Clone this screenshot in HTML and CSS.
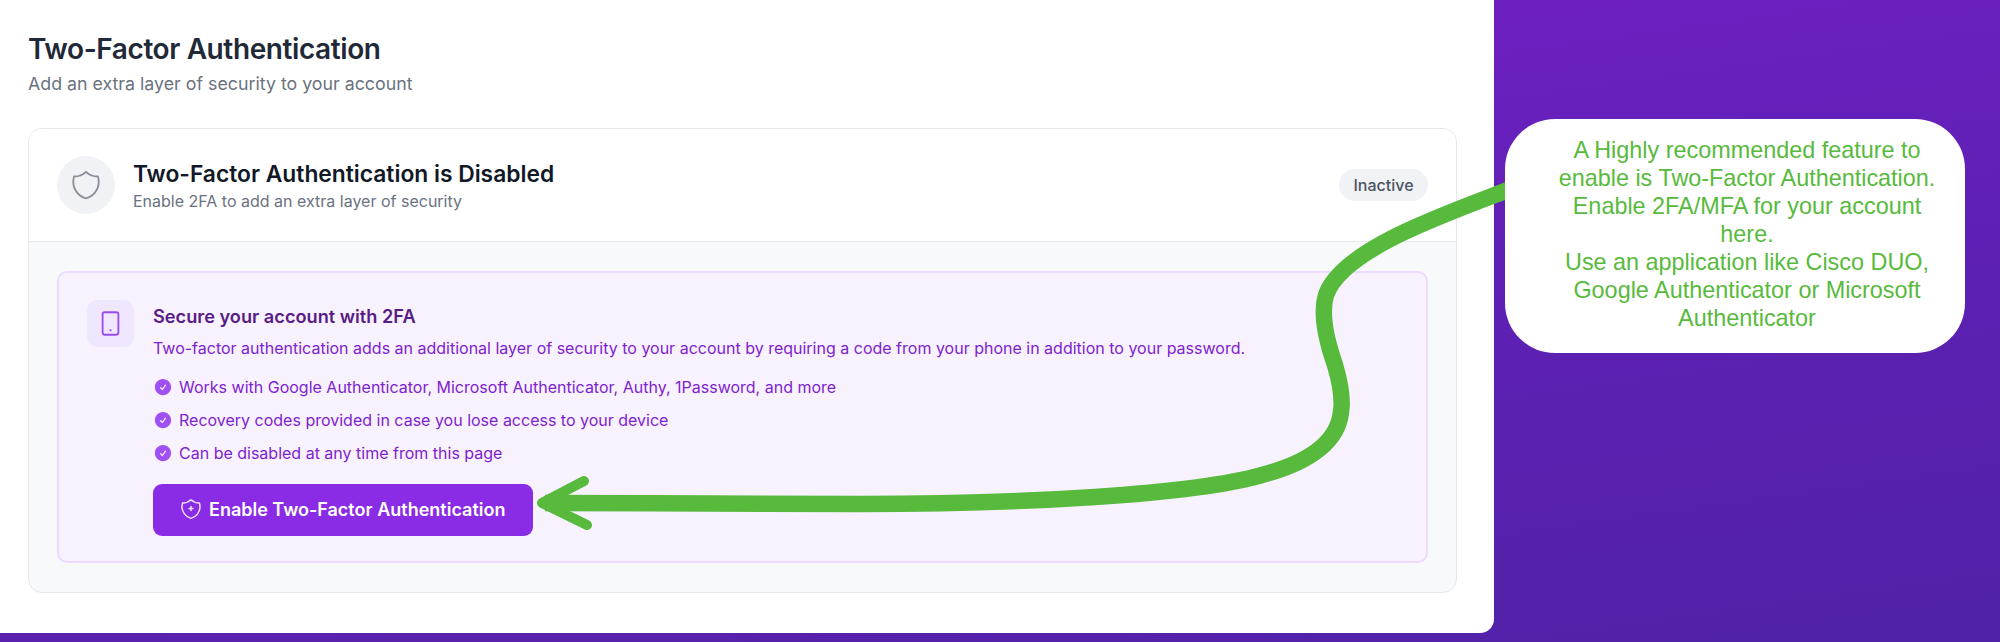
FILE: index.html
```html
<!DOCTYPE html>
<html lang="en">
<head>
<meta charset="utf-8">
<title>Two-Factor Authentication</title>
<link rel="stylesheet" href="styles.css">
</head>
<body>
<main class="panel">
  <h1 class="page-title">Two-Factor Authentication</h1>
  <p class="page-sub">Add an extra layer of security to your account</p>
  <section class="card">
    <header class="card-head">
      <div class="status-icon">
        <svg class="i-shield" viewBox="0 0 24 24" fill="none" stroke="currentColor" stroke-width="1.3" stroke-linejoin="round"><path d="M12 2.714A11.959 11.959 0 0 1 3.598 6 11.99 11.99 0 0 0 3 9.749c0 5.592 3.824 10.29 9 11.623 5.176-1.332 9-6.03 9-11.622 0-1.31-.21-2.571-.598-3.751h-.152c-3.196 0-6.1-1.248-8.25-3.286Z"/></svg>
      </div>
      <div class="status-text">
        <h2 class="status-title">Two-Factor Authentication is Disabled</h2>
        <p class="status-sub">Enable 2FA to add an extra layer of security</p>
      </div>
      <span class="badge">Inactive</span>
    </header>
    <div class="card-body">
      <div class="promo">
        <div class="promo-icon">
          <svg class="i-phone" viewBox="0 0 24 24" fill="none" stroke="currentColor" stroke-width="1.6" stroke-linecap="round"><rect x="5" y="2" width="14" height="20" rx="2"/><path d="M12 18h.01" stroke-width="2"/></svg>
        </div>
        <div class="promo-main">
          <h3 class="promo-title">Secure your account with 2FA</h3>
          <p class="promo-text">Two-factor authentication adds an additional layer of security to your account by requiring a code from your phone in addition to your password.</p>
          <ul class="checks">
            <li><svg class="i-check" viewBox="0 0 24 24" fill="currentColor"><path fill-rule="evenodd" d="M2.25 12c0-5.385 4.365-9.75 9.75-9.75s9.75 4.365 9.75 9.75-4.365 9.75-9.75 9.75S2.25 17.385 2.25 12Zm13.36-1.814a.75.75 0 1 0-1.22-.872l-3.236 4.53L9.53 12.22a.75.75 0 0 0-1.06 1.06l2.25 2.25a.75.75 0 0 0 1.14-.094l3.75-5.25Z"/></svg>Works with Google Authenticator, Microsoft Authenticator, Authy, 1Password, and more</li>
            <li><svg class="i-check" viewBox="0 0 24 24" fill="currentColor"><path fill-rule="evenodd" d="M2.25 12c0-5.385 4.365-9.75 9.75-9.75s9.75 4.365 9.75 9.75-4.365 9.75-9.75 9.75S2.25 17.385 2.25 12Zm13.36-1.814a.75.75 0 1 0-1.22-.872l-3.236 4.53L9.53 12.22a.75.75 0 0 0-1.06 1.06l2.25 2.25a.75.75 0 0 0 1.14-.094l3.75-5.25Z"/></svg>Recovery codes provided in case you lose access to your device</li>
            <li><svg class="i-check" viewBox="0 0 24 24" fill="currentColor"><path fill-rule="evenodd" d="M2.25 12c0-5.385 4.365-9.75 9.75-9.75s9.75 4.365 9.75 9.75-4.365 9.75-9.75 9.75S2.25 17.385 2.25 12Zm13.36-1.814a.75.75 0 1 0-1.22-.872l-3.236 4.53L9.53 12.22a.75.75 0 0 0-1.06 1.06l2.25 2.25a.75.75 0 0 0 1.14-.094l3.75-5.25Z"/></svg>Can be disabled at any time from this page</li>
          </ul>
          <button class="enable" type="button">
            <svg class="i-btn" viewBox="0 0 24 24" fill="none" stroke="currentColor" stroke-width="1.5" stroke-linecap="round" stroke-linejoin="round"><path d="M12 2.714A11.959 11.959 0 0 1 3.598 6 11.99 11.99 0 0 0 3 9.749c0 5.592 3.824 10.29 9 11.623 5.176-1.332 9-6.03 9-11.622 0-1.31-.21-2.571-.598-3.751h-.152c-3.196 0-6.1-1.248-8.25-3.286Z"/><path d="M12 9.5v4M10 11.5h4"/></svg>
            Enable Two-Factor Authentication
          </button>
        </div>
      </div>
    </div>
  </section>
</main>

<svg class="arrow" viewBox="0 0 2000 642" fill="none" stroke="#58ba3c" stroke-linecap="round" stroke-linejoin="round">
  <path stroke-width="16.5" stroke-linecap="butt" d="M1508 190 C1440 216 1342 250 1326 295 C1320 315 1328 345 1335 365 C1340 382 1343 400 1341 412 C1338 440 1312 462 1262 475 C1192 495 1020 504 860 504 C760 504 650 503 545 503"/>
  <path stroke-width="10" d="M584 481 L542 503 L587 525"/>
</svg>

<aside class="callout">
  <p class="callout-text">A Highly recommended feature to<br>enable is Two-Factor Authentication.<br>Enable 2FA/MFA for your account<br>here.<br>Use an application like Cisco DUO,<br>Google Authenticator or Microsoft<br>Authenticator</p>
</aside>
</body>
</html>
```

FILE: styles.css
```css
* { box-sizing: border-box; }
html, body { margin: 0; padding: 0; }
body {
  width: 2000px;
  height: 642px;
  overflow: hidden;
  position: relative;
  font-family: Inter, "Liberation Sans", sans-serif;
  background: linear-gradient(172deg, #7a1fca 0%, #6020b6 50%, #4f22a6 100%);
}
h1, h2, h3, p, ul { margin: 0; padding: 0; }

.panel {
  width: 1494px;
  height: 633px;
  background: #fff;
  border-bottom-right-radius: 14px;
  padding: 33px 37px 0 28px;
}
.page-title { font-size: 28px; line-height: 32px; font-weight: 600; color: #1f2937; letter-spacing: -0.4px; }
.page-sub { margin-top: 7px; font-size: 17.8px; line-height: 24px; color: #6b7280; }

.card {
  margin-top: 32px;
  height: 465px;
  border: 1.5px solid #e5e7eb;
  border-radius: 14px;
  overflow: hidden;
  background: #f8f9fb;
}
.card-head {
  height: 113px;
  background: #fff;
  border-bottom: 1.5px solid #e5e7eb;
  display: flex;
  align-items: center;
  padding: 0 28px;
}
.status-icon {
  width: 58px;
  height: 58px;
  border-radius: 50%;
  background: #f1f2f6;
  color: #8b919c;
  display: flex;
  align-items: center;
  justify-content: center;
  flex: none;
}
.i-shield { width: 34px; height: 34px; }
.status-text { margin-left: 18px; flex: 1; }
.status-title { font-size: 22.8px; line-height: 30px; font-weight: 600; color: #111827; }
.status-sub { font-size: 16px; line-height: 20px; margin-top: 2px; color: #6b7280; }
.badge {
  width: 89px;
  height: 32px;
  border-radius: 16px;
  background: #f1f2f5;
  color: #4b5563;
  font-size: 16px;
  font-weight: 500;
  display: flex;
  align-items: center;
  justify-content: center;
}

.card-body { padding: 29px 28px; }
.promo {
  height: 292px;
  background: #f8f2ff;
  border: 2px solid #ebdbff;
  border-radius: 10px;
  padding: 27px 28px;
  display: flex;
  gap: 19px;
}
.promo-icon {
  width: 47px;
  height: 47px;
  border-radius: 10px;
  background: #f1e6ff;
  color: #9a4bf0;
  display: flex;
  align-items: center;
  justify-content: center;
  flex: none;
}
.i-phone { width: 27px; height: 27px; }
.promo-main { flex: 1; padding-top: 2px; }
.promo-title { font-size: 18.2px; line-height: 28px; font-weight: 600; color: #581c87; }
.promo-text { margin-top: 6px; font-size: 16px; line-height: 24px; color: #7e22ce; }
.checks { margin-top: 15px; list-style: none; display: flex; flex-direction: column; gap: 9px; }
.checks li { display: flex; align-items: center; gap: 6px; height: 24px; font-size: 16px; line-height: 24px; color: #7e22ce; }
.i-check { width: 20px; height: 20px; color: #a04ff2; flex: none; }

.enable {
  margin-top: 19px;
  width: 380px;
  height: 52px;
  border: 0;
  border-radius: 9px;
  background: #8a2be6;
  color: #fff;
  font-family: inherit;
  font-size: 18px;
  font-weight: 600;
  display: flex;
  align-items: center;
  gap: 6px;
  padding: 0 0 2px 26px;
}
.i-btn { width: 24px; height: 24px; color: #f0e2ff; flex: none; }

.arrow { position: absolute; left: 0; top: 0; width: 2000px; height: 642px; }
.callout {
  position: absolute;
  left: 1505px;
  top: 119px;
  width: 460px;
  height: 234px;
  background: #fff;
  border-radius: 50px;
  padding: 17px 0 0 24px;
}
.callout-text {
  font-family: "Liberation Sans", Arial, sans-serif;
  font-size: 23.4px;
  line-height: 28px;
  text-align: center;
  color: #58ba3c;
}
```
